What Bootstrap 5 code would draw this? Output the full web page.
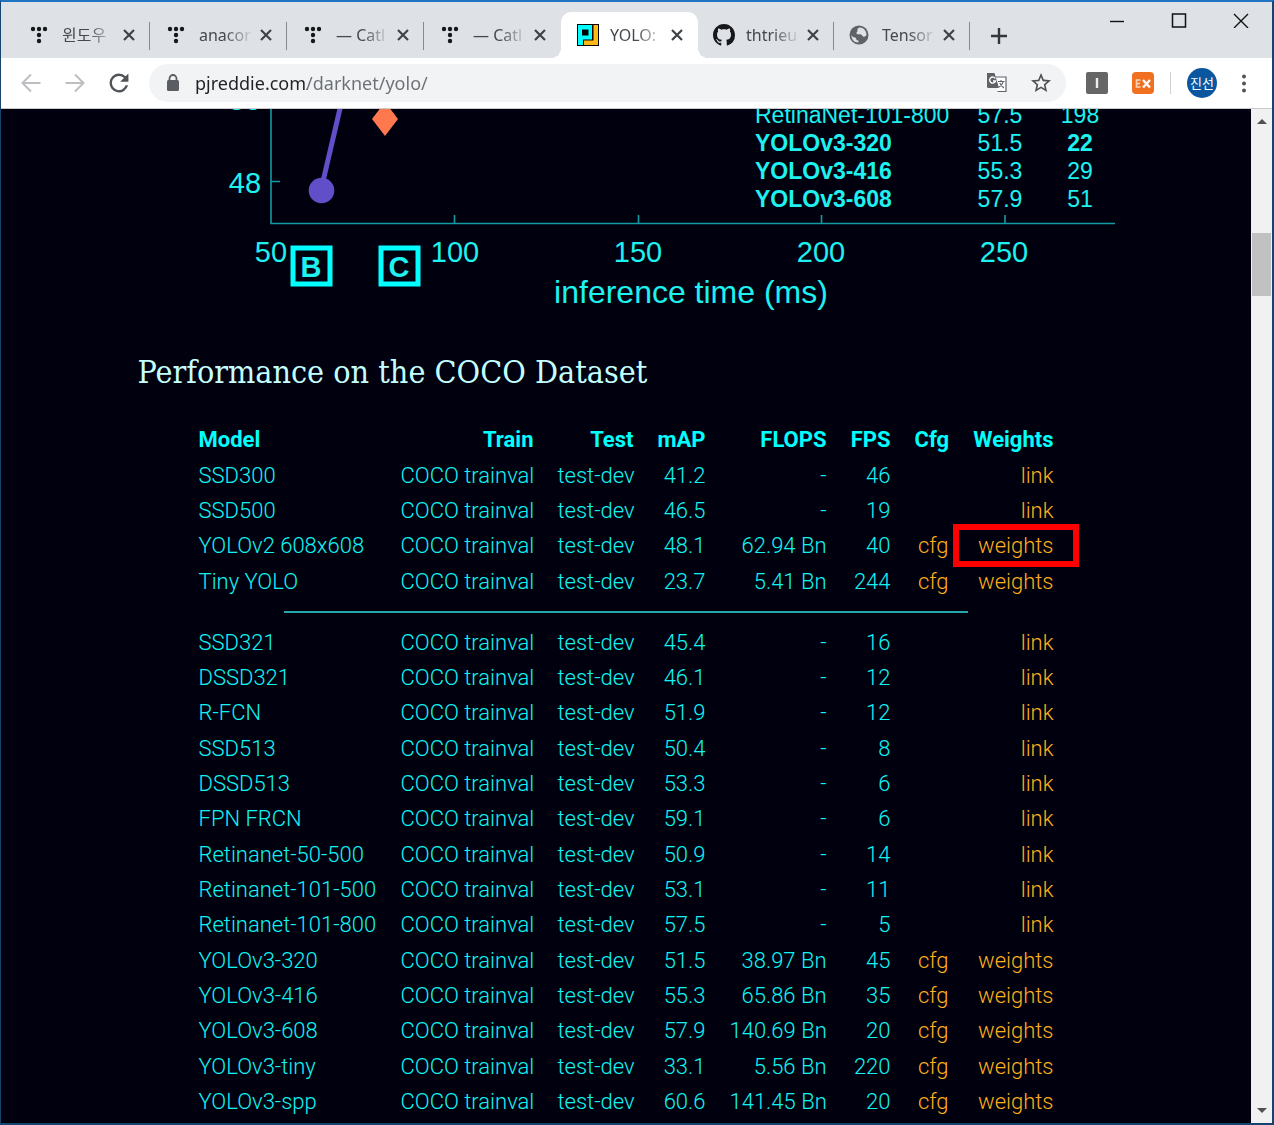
<!DOCTYPE html>
<html lang="en">
<head>
<meta charset="utf-8">
<meta name="viewport" content="width=device-width, initial-scale=1">
<title>YOLO: Real-Time Object Detection</title>
<link href="https://cdn.jsdelivr.net/npm/bootstrap@5.3.0/dist/css/bootstrap.min.css" rel="stylesheet">
<style>
:root { --aqua: #10f4f4; --night: #00000f; }
body { background: var(--night); font-family: "Noto Sans", "Noto Sans CJK KR", sans-serif; }
svg { display: block; flex: none; }
.browser { border: solid #16446f; border-width: 2px 2px 2px 1px; border-top-color: #1e74c0; background: #dee1e6; }
.plain { border: 0; background: none; padding: 0; color: #3c4043; }

/* tab strip */
.strip { height: 56px; padding-left: 12px; }
.tab-list { padding-top: 10px; }
.tab-item { width: 137px; height: 46px; padding-left: 16px; padding-right: 15px; position: relative; }
.tab-item.current ~ .tab-item { width: 136px; padding-left: 15px; }
.tab-item.ruled::after { content: ""; width: 1px; height: 28px; background: #868a90; position: absolute; right: 0; top: 10px; }
.tab-item.current { background: #fff; border-radius: 10px 10px 0 0; }
.tab-item.current::before, .tab-item.current::after { content: ""; position: absolute; bottom: 0; width: 10px; height: 10px; }
.tab-item.current::before { left: -10px; background: radial-gradient(circle at 0 0, transparent 10px, #fff 10px); }
.tab-item.current::after { right: -10px; background: radial-gradient(circle at 100% 0, transparent 10px, #fff 10px); }
.tab-name { width: 52px; margin-left: 11px; font-size: 16px; line-height: 24px; color: #45494d; text-decoration: none; white-space: nowrap;
  -webkit-mask-image: linear-gradient(90deg, #000 50%, rgba(0,0,0,.1)); mask-image: linear-gradient(90deg, #000 50%, rgba(0,0,0,.1)); }
.tab-icon { width: 22px; }
.win-controls { gap: 46px; padding: 10px 23px 0 0; }

/* toolbar */
.toolbar { height: 51px; background: #fff; border-bottom: 1px solid #c8cacc; padding: 0 21px 0 16px; }
.omni { height: 38px; background: #f1f3f4; border-radius: 19px; padding: 0 15px 0 16px; }
.omni input { border: 0; outline: 0; padding: 0; margin-left: 14px; min-width: 0; font-size: 18px; line-height: 26px; color: transparent;
  background: linear-gradient(90deg, #202124 112px, #6b6f74 112px); -webkit-background-clip: text; background-clip: text; }
.avatar { width: 30px; height: 30px; background: #0a57a0; color: #fff; font: 13px/30px "Noto Sans CJK KR", sans-serif; }
.ext-rule { width: 1px; height: 22px; background: #cfd1d4; }

/* page */
.site { background: var(--night); min-width: 0; }
.site-body { max-width: 977px; }
.site h2 { font-family: "Roboto Slab", "DejaVu Serif Condensed", "DejaVu Serif", serif; font-size: 32px; line-height: 40px; color: #c4ffff; margin: 23px 0 30px; font-weight: 400; }
.chart text { font-family: "Liberation Sans", Arial, sans-serif; fill: #1ff0f0; }
.results { table-layout: fixed; width: 879px; font-family: Roboto, sans-serif; font-size: 22px; font-weight: 300; line-height: 34px; color: var(--aqua); }
.results th, .results td { padding: 0 12px; height: 35px; text-align: right; white-space: nowrap; }
.results th, .results tr:nth-child(3n) td { height: 36px; }
.results th:first-child, .results td:first-child { text-align: left; }
.results th { color: #00ffff; font-weight: 700; }
.results a { color: #ffb01c; text-decoration: none; }
.results .split td { height: 26px; }
.results hr { width: 80%; margin: 0 auto; border-top: 2px solid #26a5ab; opacity: 1; }
.marker { position: absolute; inset: -4px -13px -3px -8px; border: 6px solid #f00; pointer-events: none; }

/* scrollbar */
.rail { width: 21px; background: #f1f1f1; padding: 9px 1px; }
.rail-thumb { height: 63px; margin-top: 109px; background: #c1c1c1; }
</style>
</head>
<body>
<svg width="0" height="0" class="position-absolute" aria-hidden="true">
  <symbol id="dots" viewBox="0 0 22 22"><g fill="#16181a"><circle cx="4" cy="5" r="2.2"/><circle cx="10" cy="5" r="2.2"/><circle cx="16" cy="5" r="2.2"/><circle cx="10" cy="11" r="2.2"/><circle cx="10" cy="17" r="2.2"/></g></symbol>
  <symbol id="cross" viewBox="0 0 12 12"><path d="M1 1 11 11M11 1 1 11" stroke="#3f4346" stroke-width="2.2" fill="none"/></symbol>
</svg>
<div class="browser vh-100 d-flex flex-column overflow-hidden">
  <header class="strip d-flex flex-shrink-0">
    <nav class="tab-list d-flex" aria-label="Tabs">
      <div class="tab-item ruled d-flex align-items-center"><svg class="tab-icon" height="22"><use href="#dots"/></svg><a class="tab-name" href="#">윈도우</a><button class="plain ms-auto" aria-label="Close tab"><svg width="12" height="12"><use href="#cross"/></svg></button></div>
      <div class="tab-item ruled d-flex align-items-center"><svg class="tab-icon" height="22"><use href="#dots"/></svg><a class="tab-name" href="#">anacor</a><button class="plain ms-auto" aria-label="Close tab"><svg width="12" height="12"><use href="#cross"/></svg></button></div>
      <div class="tab-item ruled d-flex align-items-center"><svg class="tab-icon" height="22"><use href="#dots"/></svg><a class="tab-name" href="#">— Catl</a><button class="plain ms-auto" aria-label="Close tab"><svg width="12" height="12"><use href="#cross"/></svg></button></div>
      <div class="tab-item d-flex align-items-center"><svg class="tab-icon" height="22"><use href="#dots"/></svg><a class="tab-name" href="#">— Catl</a><button class="plain ms-auto" aria-label="Close tab"><svg width="12" height="12"><use href="#cross"/></svg></button></div>
      <div class="tab-item current d-flex align-items-center"><svg class="tab-icon" height="22" viewBox="0 0 22 22"><path d="M0 0H22V22H0Z"/><path fill="#0ff" fill-rule="evenodd" d="M1 1H15V15.5H6V21H1ZM5 5.5V11.5H11.500V5.500Z"/><path fill="#fdb913" d="M16.500 1H21V21H7V16.500H16.500Z"/></svg><a class="tab-name" href="#" aria-current="page">YOLO:</a><button class="plain ms-auto" aria-label="Close tab"><svg width="12" height="12"><use href="#cross"/></svg></button></div>
      <div class="tab-item ruled d-flex align-items-center"><svg class="tab-icon" height="22" viewBox="0 0 16 16"><path fill="#16181b" d="M8 0C3.580 0 0 3.580 0 8c0 3.540 2.290 6.530 5.470 7.590.4.070.55-.17.55-.38 0-.19-.01-.82-.01-1.490-2.010.37-2.530-.49-2.690-.94-.09-.23-.48-.94-.82-1.130-.28-.15-.68-.52-.01-.53.63-.01 1.080.58 1.230.82.72 1.210 1.870.87 2.330.66.070-.52.28-.87.51-1.070-1.780-.2-3.640-.89-3.640-3.950 0-.87.31-1.590.82-2.150-.08-.2-.36-1.020.08-2.120 0 0 .67-.21 2.200.82.64-.18 1.320-.27 2-.27s1.360.09 2 .27c1.530-1.040 2.200-.82 2.200-.82.44 1.100.16 1.920.08 2.120.51.56.82 1.270.82 2.150 0 3.070-1.870 3.750-3.650 3.950.29.25.54.73.54 1.480 0 1.070-.01 1.930-.01 2.200 0 .21.15.46.55.38A8.010 8.010 0 0 0 16 8c0-4.420-3.580-8-8-8z"/></svg><a class="tab-name" href="#">thtrieu</a><button class="plain ms-auto" aria-label="Close tab"><svg width="12" height="12"><use href="#cross"/></svg></button></div>
      <div class="tab-item ruled d-flex align-items-center"><svg class="tab-icon" height="22" viewBox="1 1 22 22"><circle cx="11" cy="12" r="9.500" fill="#5f6368"/><path fill="#dee1e6" d="M3.500 11.500C4 14.500 6.500 14 7.500 14.800S8 17.500 10 17.500c.8 0 .5 1 .5 2C6 19.500 3 16 3.500 11.500ZM12 4.500C9.500 5 9 6.500 9.500 7.500S8 9 8.500 10.500s3 .5 4.500 1 1 2 2.500 2.200 2.300-.7 3-1.700C18.500 8 16 5 12 4.500Z"/></svg><a class="tab-name" href="#">Tensor</a><button class="plain ms-auto" aria-label="Close tab"><svg width="12" height="12"><use href="#cross"/></svg></button></div>
    </nav>
    <button class="plain ps-3 ms-1 pt-2 mt-1" aria-label="New tab"><svg width="18" height="18" viewBox="0 0 18 18"><path d="M9 1V17M1 9H17" stroke="#33373a" stroke-width="2.400"/></svg></button>
    <div class="win-controls d-flex align-items-start ms-auto">
      <button class="plain" aria-label="Minimize"><svg width="16" height="16"><path d="M1 9.500H15" stroke="#111" stroke-width="1.400"/></svg></button>
      <button class="plain" aria-label="Maximize"><svg width="16" height="16"><path d="M1.500 2H14.500V15H1.500Z" stroke="#111" stroke-width="1.500" fill="none"/></svg></button>
      <button class="plain" aria-label="Close"><svg width="16" height="16"><path d="M1 2 15 16M15 2 1 16" stroke="#111" stroke-width="1.400"/></svg></button>
    </div>
  </header>
  <div class="toolbar d-flex align-items-center flex-shrink-0">
    <div class="d-flex align-items-center gap-3 me-3">
      <button class="plain px-1" aria-label="Back"><svg width="20" height="20" viewBox="0 0 20 20"><path d="M19.500 10H2M10 1.500 1.500 10 10 18.500" fill="none" stroke="#bcbec1" stroke-width="2"/></svg></button>
      <button class="plain px-1" aria-label="Forward"><svg width="20" height="20" viewBox="0 0 20 20"><path d="M.5 10H18M10 1.500 18.500 10 10 18.500" fill="none" stroke="#bcbec1" stroke-width="2"/></svg></button>
      <button class="plain px-1" aria-label="Reload"><svg width="20" height="20" viewBox="3.500 3.500 17 17"><path fill="#505458" d="M17.650 6.350A7.950 7.950 0 0 0 12 4a8 8 0 1 0 7.730 10h-2.080A6 6 0 1 1 12 6c1.660 0 3.140.69 4.220 1.780L13 11h7V4z"/></svg></button>
    </div>
    <div class="omni d-flex align-items-center flex-fill">
      <svg width="16" height="20" viewBox="0 0 16 20"><rect x="2" y="7" width="12" height="11" rx="1.500" fill="#5a5e62"/><path d="M4.500 8V5.500a3.500 3.500 0 0 1 7 0V8" fill="none" stroke="#5a5e62" stroke-width="1.800"/></svg>
      <input class="flex-fill" type="text" aria-label="Address" value="pjreddie.com/darknet/yolo/">
      <button class="plain me-4" aria-label="Translate this page"><svg width="20" height="20" viewBox="0 0 20 20"><path d="M8.500 4H19V18.500H10.500" fill="#fff" stroke="#5f6368" stroke-width="1.200"/><path d="M0 0H7.500L12 15H1.500Q0 15 0 13.500Z" fill="#5f6368"/><path d="M8.200 5.500A3 3 0 1 0 8.500 8H6" fill="none" stroke="#fff" stroke-width="1.400"/><path d="M11 8.500H17.500M14 7V8.500M16.200 8.500Q15.500 12 12 14M12.800 10Q14 13 17 15" fill="none" stroke="#5f6368" stroke-width="1.100"/></svg></button>
      <button class="plain" aria-label="Bookmark this page"><svg width="20" height="20" viewBox="2 2 20 20"><path fill="#4d5155" d="M22 9.240l-7.190-.62L12 2 9.190 8.630 2 9.240l5.460 4.730L5.820 21 12 17.270 18.180 21l-1.630-7.030L22 9.240zM12 15.400l-3.760 2.270 1-4.280-3.320-2.880 4.380-.38L12 6.100l1.710 4.040 4.380.38-3.320 2.880 1 4.280L12 15.400z"/></svg></button>
    </div>
    <div class="d-flex align-items-center ms-3">
      <button class="plain ms-1" aria-label="Extension I"><svg width="22" height="22"><rect width="22" height="22" rx="2" fill="#666"/><path d="M11 6V16" stroke="#eee" stroke-width="2.400"/></svg></button>
      <button class="plain ms-4" aria-label="Extension EX"><svg width="22" height="22"><rect width="22" height="22" rx="4" fill="#f07020"/><path d="M8.500 8H4.500V15H8.500M4.500 11.500H8" fill="none" stroke="#fbd3b8" stroke-width="1.600"/><path d="M11 8 18 15.500M18 8 11 15.500" stroke="#fff" stroke-width="2.400"/></svg></button>
      <span class="ext-rule ms-3 me-3"></span>
      <button class="plain avatar rounded-circle text-center" aria-label="Profile">진선</button>
      <button class="plain ms-3 ps-2 pe-1" aria-label="Menu"><svg width="6" height="20" viewBox="0 0 6 20"><g fill="#505458"><circle cx="3" cy="3.500" r="2"/><circle cx="3" cy="10.500" r="2"/><circle cx="3" cy="17.500" r="2"/></g></svg></button>
    </div>
  </div>

  <div class="d-flex flex-fill overflow-hidden">
    <main class="site flex-fill overflow-hidden">
      <div class="site-body mx-auto">
        <svg class="chart w-100" viewBox="137 109 977 220" role="img" aria-label="Accuracy against inference time">
          <g fill="none" stroke="#129ba2" stroke-width="1.600"><path d="M270 100V223.500H1114M270 181.500H279M453.500 223V215M637.500 223V215M820.500 223V215M1004 223V215"/></g>
          <path d="M320 190 341 100" stroke="#614fca" stroke-width="5"/><circle cx="320.500" cy="190.500" r="12.800" fill="#614fca"/>
          <path d="M384 102 397 119 384 136 371 119Z" fill="#ff784e"/>
          <g font-size="29" text-anchor="middle">
            <text x="244" y="110">50</text><text x="244" y="193">48</text>
            <text x="270" y="262">50</text><text x="454" y="262">100</text><text x="637" y="262">150</text><text x="820" y="262">200</text><text x="1003" y="262">250</text>
          </g>
          <text x="690" y="303" font-size="32" text-anchor="middle">inference time (ms)</text>
          <g fill="none" stroke="#0ff" stroke-width="5"><path d="M292 248H329V284H292ZM380 248H417V284H380Z"/></g>
          <g font-size="29" font-weight="700" text-anchor="middle"><text x="310" y="277">B</text><text x="398" y="277">C</text></g>
          <g font-size="23">
            <text x="754" y="123">RetinaNet-101-800</text>
            <g font-weight="700"><text x="754" y="151">YOLOv3-320</text><text x="754" y="179">YOLOv3-416</text><text x="754" y="207">YOLOv3-608</text></g>
            <g text-anchor="middle"><text x="999" y="123">57.5</text><text x="999" y="151">51.5</text><text x="999" y="179">55.3</text><text x="999" y="207">57.9</text>
            <text x="1079" y="123">198</text><text x="1079" y="151" font-weight="700">22</text><text x="1079" y="179">29</text><text x="1079" y="207">51</text></g>
          </g>
        </svg>
        <h2>Performance on the COCO Dataset</h2>
        <table class="results mx-auto">
          <colgroup><col style="width:202px"><col style="width:157px"><col style="width:100px"><col style="width:72px"><col style="width:121px"><col style="width:64px"><col style="width:58px"><col style="width:105px"></colgroup>
          <thead><tr><th>Model</th><th>Train</th><th>Test</th><th>mAP</th><th>FLOPS</th><th>FPS</th><th>Cfg</th><th>Weights</th></tr></thead>
          <tbody>
            <tr><td>SSD300</td><td>COCO trainval</td><td>test-dev</td><td>41.2</td><td>-</td><td>46</td><td></td><td><a href="#">link</a></td></tr>
            <tr><td>SSD500</td><td>COCO trainval</td><td>test-dev</td><td>46.5</td><td>-</td><td>19</td><td></td><td><a href="#">link</a></td></tr>
            <tr><td>YOLOv2 608x608</td><td>COCO trainval</td><td>test-dev</td><td>48.1</td><td>62.94 Bn</td><td>40</td><td><a href="#">cfg</a></td><td class="position-relative"><a href="#">weights</a><span class="marker"></span></td></tr>
            <tr><td>Tiny YOLO</td><td>COCO trainval</td><td>test-dev</td><td>23.7</td><td>5.41 Bn</td><td>244</td><td><a href="#">cfg</a></td><td><a href="#">weights</a></td></tr>
          </tbody>
          <tbody class="split"><tr><td colspan="8"><hr></td></tr></tbody>
          <tbody>
            <tr><td>SSD321</td><td>COCO trainval</td><td>test-dev</td><td>45.4</td><td>-</td><td>16</td><td></td><td><a href="#">link</a></td></tr>
            <tr><td>DSSD321</td><td>COCO trainval</td><td>test-dev</td><td>46.1</td><td>-</td><td>12</td><td></td><td><a href="#">link</a></td></tr>
            <tr><td>R-FCN</td><td>COCO trainval</td><td>test-dev</td><td>51.9</td><td>-</td><td>12</td><td></td><td><a href="#">link</a></td></tr>
            <tr><td>SSD513</td><td>COCO trainval</td><td>test-dev</td><td>50.4</td><td>-</td><td>8</td><td></td><td><a href="#">link</a></td></tr>
            <tr><td>DSSD513</td><td>COCO trainval</td><td>test-dev</td><td>53.3</td><td>-</td><td>6</td><td></td><td><a href="#">link</a></td></tr>
            <tr><td>FPN FRCN</td><td>COCO trainval</td><td>test-dev</td><td>59.1</td><td>-</td><td>6</td><td></td><td><a href="#">link</a></td></tr>
            <tr><td>Retinanet-50-500</td><td>COCO trainval</td><td>test-dev</td><td>50.9</td><td>-</td><td>14</td><td></td><td><a href="#">link</a></td></tr>
            <tr><td>Retinanet-101-500</td><td>COCO trainval</td><td>test-dev</td><td>53.1</td><td>-</td><td>11</td><td></td><td><a href="#">link</a></td></tr>
            <tr><td>Retinanet-101-800</td><td>COCO trainval</td><td>test-dev</td><td>57.5</td><td>-</td><td>5</td><td></td><td><a href="#">link</a></td></tr>
            <tr><td>YOLOv3-320</td><td>COCO trainval</td><td>test-dev</td><td>51.5</td><td>38.97 Bn</td><td>45</td><td><a href="#">cfg</a></td><td><a href="#">weights</a></td></tr>
            <tr><td>YOLOv3-416</td><td>COCO trainval</td><td>test-dev</td><td>55.3</td><td>65.86 Bn</td><td>35</td><td><a href="#">cfg</a></td><td><a href="#">weights</a></td></tr>
            <tr><td>YOLOv3-608</td><td>COCO trainval</td><td>test-dev</td><td>57.9</td><td>140.69 Bn</td><td>20</td><td><a href="#">cfg</a></td><td><a href="#">weights</a></td></tr>
            <tr><td>YOLOv3-tiny</td><td>COCO trainval</td><td>test-dev</td><td>33.1</td><td>5.56 Bn</td><td>220</td><td><a href="#">cfg</a></td><td><a href="#">weights</a></td></tr>
            <tr><td>YOLOv3-spp</td><td>COCO trainval</td><td>test-dev</td><td>60.6</td><td>141.45 Bn</td><td>20</td><td><a href="#">cfg</a></td><td><a href="#">weights</a></td></tr>
          </tbody>
        </table>
      </div>
    </main>
    <div class="rail d-flex flex-column flex-shrink-0" aria-hidden="true">
      <svg class="mx-auto" width="10" height="6"><path d="M0 6 5 1 10 6Z" fill="#505050"/></svg>
      <div class="rail-thumb"></div>
      <svg class="mx-auto mt-auto" width="10" height="6"><path d="M0 0 5 5 10 0Z" fill="#505050"/></svg>
    </div>
  </div>
</div>
<script src="https://cdn.jsdelivr.net/npm/bootstrap@5.3.0/dist/js/bootstrap.bundle.min.js"></script>
</body>
</html>
